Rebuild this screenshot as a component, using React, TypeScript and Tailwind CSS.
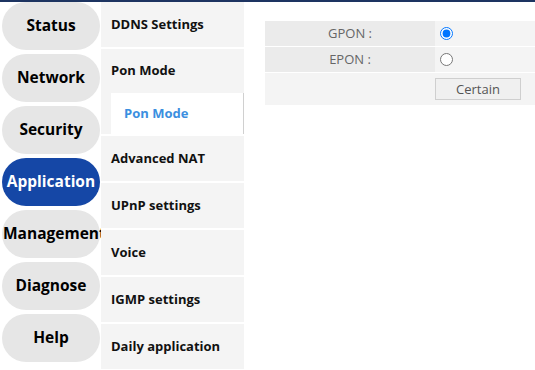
import React from 'react';

const mainMenu = ['Status', 'Network', 'Security', 'Application', 'Management', 'Diagnose', 'Help'];

const subMenu = ['Advanced NAT', 'UPnP settings', 'Voice', 'IGMP settings', 'Daily application'];

export default function App() {
  return (
    <div className="w-[535px] h-[370px] bg-white overflow-hidden flex flex-col font-['Open_Sans',sans-serif]">
      {/* top strip */}
      <div className="h-[2px] bg-[#1d3461] shrink-0" />
      <div className="flex flex-1 min-h-0">
        {/* main menu pills */}
        <div className="w-[101px] shrink-0 flex flex-col gap-[4px] pl-[2px] overflow-hidden">
          {mainMenu.map((m) => (
            <div
              key={m}
              className={`h-[48px] w-[98px] shrink-0 rounded-full flex items-center text-[15.5px] font-bold whitespace-nowrap ${
                m === 'Application' ? 'bg-[#1547a6] text-white' : 'bg-[#e6e6e6] text-black'
              } ${m === 'Management' ? 'justify-start pl-[1px]' : 'justify-center'}`}
            >
              {m}
            </div>
          ))}
        </div>

        {/* sub menu */}
        <div className="w-[143px] shrink-0 flex flex-col gap-[2px] text-[13px] font-bold text-[#111]">
          <div className="h-[45px] bg-[#f4f4f4] flex items-center pl-[10px]">DDNS Settings</div>
          <div className="bg-[#f4f4f4] flex flex-col">
            <div className="h-[44px] flex items-center pl-[10px]">Pon Mode</div>
            <div className="ml-[10px] h-[41px] bg-white border-r border-[#d0d0d0] flex items-center pl-[13px] text-[#3b8fe0]">
              Pon Mode
            </div>
          </div>
          {subMenu.map((s) => (
            <div key={s} className="h-[45px] bg-[#f4f4f4] flex items-center pl-[10px]">
              {s}
            </div>
          ))}
        </div>

        {/* content */}
        <div className="flex-1 pt-[19px] pl-[21px]">
          <div className="flex flex-col gap-[1px] text-[13px] text-[#666]">
            <div className="flex h-[25px]">
              <div className="w-[170px] bg-[#ebebeb] flex items-center justify-center">GPON :</div>
              <div className="flex-1 bg-[#f4f4f4] flex items-center pl-[5px]">
                <input type="radio" name="mode" defaultChecked className="m-0 w-[13px] h-[13px]" />
              </div>
            </div>
            <div className="flex h-[25px]">
              <div className="w-[170px] bg-[#ebebeb] flex items-center justify-center">EPON :</div>
              <div className="flex-1 bg-[#f4f4f4] flex items-center pl-[5px]">
                <input type="radio" name="mode" className="m-0 w-[13px] h-[13px]" />
              </div>
            </div>
            <div className="flex h-[32px] bg-[#f4f4f4] items-center">
              <div className="w-[170px]" />
              <button className="w-[86px] h-[22px] border border-[#cfcfcf] bg-[#f0f0f0] text-[#555] text-[13px] leading-none">
                Certain
              </button>
            </div>
          </div>
        </div>
      </div>
    </div>
  );
}
